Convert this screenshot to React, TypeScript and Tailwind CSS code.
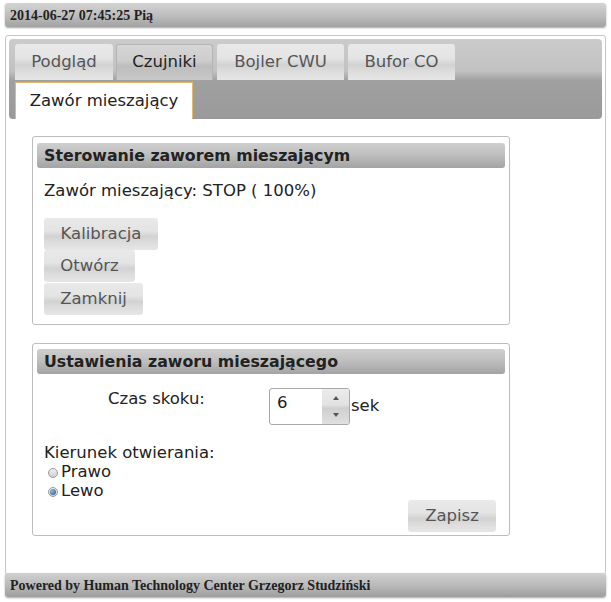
import React from "react";

const glass =
  "bg-[linear-gradient(to_bottom,#e9e9e9_0%,#e4e4e4_40%,#d2d2d2_58%,#dcdcdc_75%,#e6e6e6_100%)]";

function Btn({ children, w }: { children: React.ReactNode; w: string }) {
  return (
    <div
      className={`${glass} ${w} h-[32px] rounded-[3px] flex items-center justify-center text-[16.5px] text-[#555]`}
    >
      {children}
    </div>
  );
}

function Radio({ checked, label }: { checked?: boolean; label: string }) {
  return (
    <div className="flex items-center h-[19px] pl-[4px]">
      <span className="w-[10px] h-[10px] rounded-full border border-[#9a9a9a] bg-[linear-gradient(to_bottom,#f0f0f0,#cfcfcf)] flex items-center justify-center mr-[3px]">
        {checked && (
          <span className="w-[6px] h-[6px] rounded-full bg-[radial-gradient(circle_at_35%_35%,#8fb4d8,#23598c)]" />
        )}
      </span>
      <span className="text-[16.5px] text-[#222]">{label}</span>
    </div>
  );
}

function SectionHeader({ title }: { title: string }) {
  return (
    <div className="h-[25px] rounded-[3px] bg-[linear-gradient(to_bottom,#cfcfcf_0%,#bdbdbd_50%,#a3a3a3_100%)] flex items-center pl-[7px] text-[15.8px] font-bold text-[#222]">
      {title}
    </div>
  );
}

export default function App() {
  return (
    <div className="w-[611px] h-[602px] bg-white font-['DejaVu_Sans',sans-serif] overflow-hidden">
      <div className="pt-[3px] px-[5px]">
        <div className="h-[24px] rounded-[3px] bg-[linear-gradient(to_bottom,#d4d4d4_0%,#bcbcbc_55%,#a2a2a2_100%)] shadow-[0_1px_2px_rgba(0,0,0,0.35)] flex items-center pl-[5px] font-['Liberation_Serif',serif] font-bold text-[14px] text-[#222]">
          2014-06-27 07:45:25 Pią
        </div>
      </div>

      <div className="mx-[5px] mt-[8px] h-[540px] border border-[#c6c6c6] rounded-[3px] p-[3px]">
        <div className="h-[80px] rounded-[4px] bg-[linear-gradient(to_bottom,#cbcbcb_0%,#c2c2c2_40%,#a0a0a0_52%,#9a9a9a_100%)] pt-[5px] pl-[6px]">
          <div className="flex gap-[3px] h-[36px]">
            <div className={`${glass} w-[98px] rounded-t-[3px] flex items-center justify-center text-[16.5px] text-[#555]`}>
              Podgląd
            </div>
            <div className="w-[97px] rounded-t-[3px] border border-[#b4b4b4] border-b-0 bg-[linear-gradient(to_bottom,#d6d6d6_0%,#cdcdcd_45%,#bdbdbd_60%,#c8c8c8_100%)] flex items-center justify-center text-[16.5px] text-[#222]">
              Czujniki
            </div>
            <div className={`${glass} w-[127px] ml-[1px] rounded-t-[3px] flex items-center justify-center text-[16.5px] text-[#555]`}>
              Bojler CWU
            </div>
            <div className={`${glass} w-[107px] ml-[1px] rounded-t-[3px] flex items-center justify-center text-[16.5px] text-[#555]`}>
              Bufor CO
            </div>
          </div>
          <div className="mt-[2px] w-[178px] h-[37px] bg-white border border-[#e3bb6e] border-b-0 flex items-center justify-center text-[16.5px] text-[#222]">
            Zawór mieszający
          </div>
        </div>

        <div className="pl-[23px]">
          <div className="mt-[17px] w-[478px] h-[189px] border border-[#bdbdbd] rounded-[3px] px-[4px] pt-[6px]">
            <SectionHeader title="Sterowanie zaworem mieszającym" />
            <div className="pl-[7px]">
              <div className="mt-[13px] text-[16.5px] leading-[20px] text-[#222]">
                Zawór mieszający: STOP ( 100%)
              </div>
              <div className="mt-[17px] flex flex-col items-start">
                <Btn w="w-[114px]">Kalibracja</Btn>
                <Btn w="w-[91px]">Otwórz</Btn>
                <div className="mt-[1px]">
                  <Btn w="w-[99px]">Zamknij</Btn>
                </div>
              </div>
            </div>
          </div>

          <div className="mt-[18px] w-[478px] h-[193px] border border-[#bdbdbd] rounded-[3px] px-[4px] pt-[5px]">
            <SectionHeader title="Ustawienia zaworu mieszającego" />
            <div className="pl-[7px] pr-[9px]">
              <div className="flex mt-[14px]">
                <div className="w-[225px] text-center text-[16.5px] leading-[20px] text-[#222] pt-[1px]">
                  Czas skoku:
                </div>
                <div className="flex items-center">
                  <div className="w-[81px] h-[37px] border border-[#a8a8a8] rounded-[3px] flex overflow-hidden">
                    <div className="flex-1 pl-[7px] pt-[2px] text-[16.5px] text-[#222]">6</div>
                    <div className="w-[27px] flex flex-col bg-[linear-gradient(to_bottom,#ececec_0%,#e2e2e2_45%,#cfcfcf_55%,#e0e0e0_100%)]">
                      <div className="flex-1 flex items-center justify-center">
                        <svg width="6" height="4" viewBox="0 0 6 4">
                          <path d="M0 4 L3 0 L6 4 Z" fill="#555" />
                        </svg>
                      </div>
                      <div className="flex-1 flex items-center justify-center">
                        <svg width="6" height="4" viewBox="0 0 6 4">
                          <path d="M0 0 L3 4 L6 0 Z" fill="#555" />
                        </svg>
                      </div>
                    </div>
                  </div>
                  <span className="text-[16.5px] text-[#222] ml-[1px]">sek</span>
                </div>
              </div>
              <div className="mt-[18px] text-[16.5px] leading-[20px] text-[#222]">
                Kierunek otwierania:
              </div>
              <Radio label="Prawo" />
              <Radio checked label="Lewo" />
              <div className="flex justify-end -mt-[1px]">
                <Btn w="w-[88px]">Zapisz</Btn>
              </div>
            </div>
          </div>
        </div>
      </div>

      <div className="px-[5px] -mt-[2px] relative">
        <div className="h-[24px] rounded-[3px] bg-[linear-gradient(to_bottom,#d0d0d0_0%,#b8b8b8_55%,#9e9e9e_100%)] shadow-[0_1px_2px_rgba(0,0,0,0.35)] flex items-center pl-[5px] font-['Liberation_Serif',serif] font-bold text-[14px] text-[#222]">
          Powered by Human Technology Center Grzegorz Studziński
        </div>
      </div>
    </div>
  );
}
